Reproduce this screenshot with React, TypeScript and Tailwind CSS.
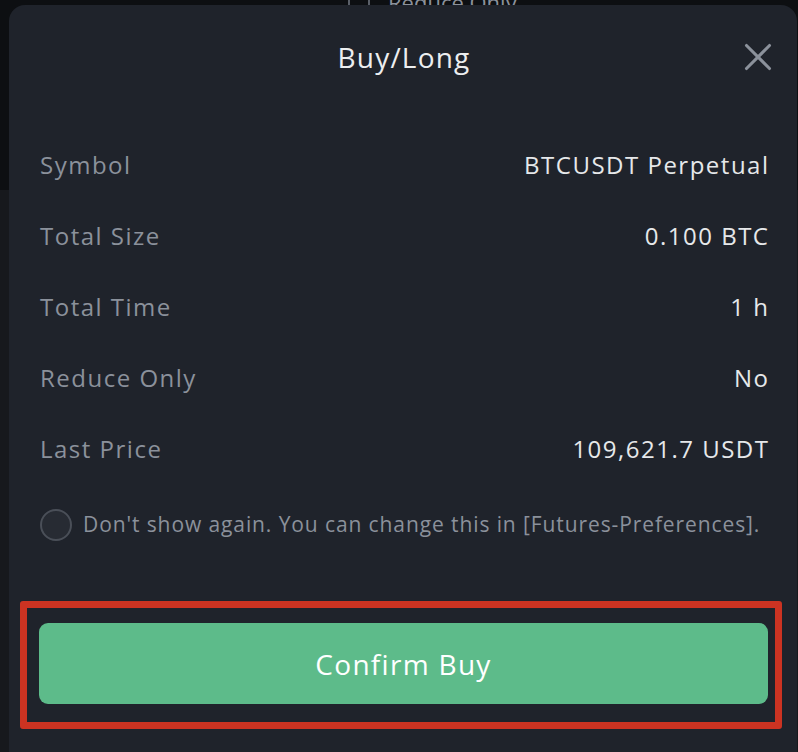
import { X } from 'lucide-react';

const rows = [
  { label: 'Symbol', value: 'BTCUSDT Perpetual' },
  { label: 'Total Size', value: '0.100 BTC' },
  { label: 'Total Time', value: '1 h' },
  { label: 'Reduce Only', value: 'No' },
  { label: 'Last Price', value: '109,621.7 USDT' },
];

export default function App() {
  return (
    <div
      className="relative w-[798px] h-[752px] overflow-hidden bg-[#17191d]"
      style={{ fontFamily: '"Open Sans", "Liberation Sans", sans-serif' }}
    >
      {/* page behind the sheet */}
      <div className="absolute left-0 top-0 w-full h-[190px] bg-[#0d0f12]" />
      <div className="absolute left-[348px] top-0 h-[5px] overflow-hidden flex items-end gap-[18px] text-[#8b919b]">
        <div className="w-[22px] h-[20px] border-x-2 border-[#5a5f68] -mb-[14px]" />
        <span className="text-[22px] leading-none -mb-[8px]">Reduce Only</span>
      </div>

      {/* sheet */}
      <div className="relative ml-[9px] mt-[5px] w-[788px] h-[747px] rounded-t-[16px] bg-[#1f232b] pl-[31px] pr-[29px]">
        <div className="relative h-[104px] flex items-center justify-center">
          <h2 className="text-[28px] text-[#eceef0] tracking-[1.2px]">Buy/Long</h2>
          <button className="absolute right-[-13px] top-[29px] text-[#8b919b]">
            <X className="w-[46px] h-[46px]" strokeWidth={1.6} />
          </button>
        </div>

        <div className="mt-[20px] flex flex-col">
          {rows.map((r) => (
            <div key={r.label} className="h-[71px] flex items-center justify-between text-[24px] tracking-[1.5px]">
              <span className="text-[#8b919b]">{r.label}</span>
              <span className="text-[#e6e8ea] -mr-[1.5px]">{r.value}</span>
            </div>
          ))}
        </div>

        <div className="mt-[6px] h-[70px] flex items-center gap-[11px]">
          <div className="w-[32px] h-[32px] shrink-0 rounded-full border-2 border-[#4a4f58] bg-[#272b33]" />
          <span className="text-[21px] text-[#8b919b] tracking-[0.9px] whitespace-nowrap">
            Don't show again. You can change this in [Futures-Preferences].
          </span>
        </div>

        <div className="mt-[41px] -ml-[20px] mr-[-14px] border-[7px] border-[#cc3322] rounded-[3px] pl-[12px] pr-[7px] pt-[15px] pb-[18px]">
          <button className="w-full h-[81px] rounded-[9px] bg-[#5dbb8a] text-white text-[28px] tracking-[1.3px] flex items-center justify-center">
            Confirm Buy
          </button>
        </div>
      </div>
    </div>
  );
}
